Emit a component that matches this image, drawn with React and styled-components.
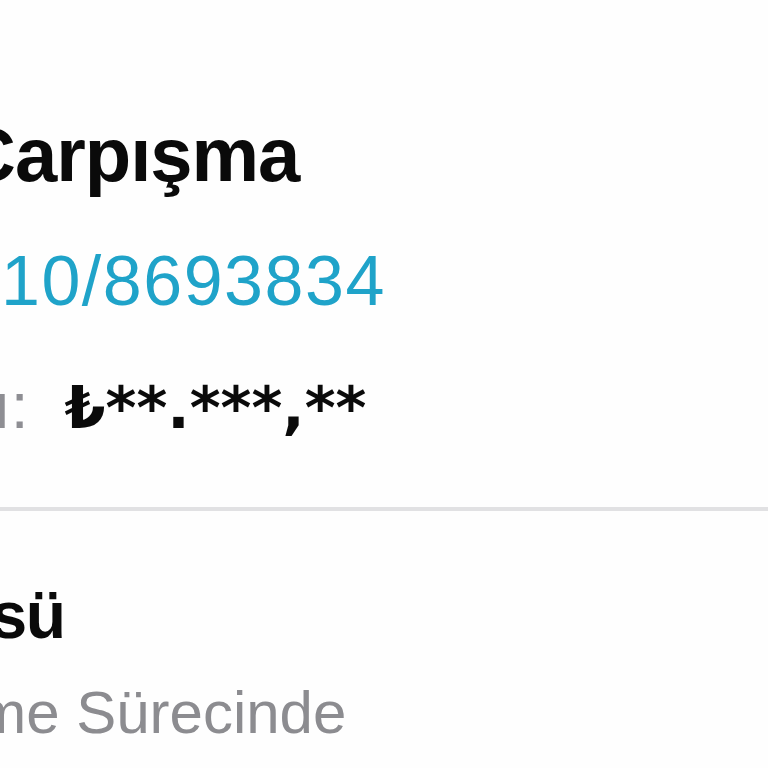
import React from "react";
import styled, { createGlobalStyle } from "styled-components";

const Global = createGlobalStyle`
  html, body { margin: 0; padding: 0; background: #fefefe; }
  body { overflow: hidden; font-family: "Liberation Sans", Arial, sans-serif; }
`;

const Page = styled.div`
  width: 768px;
  height: 768px;
  overflow: hidden;
  background: #fefefe;
  display: flex;
  flex-direction: column;
`;

const Section = styled.section`
  display: flex;
  flex-direction: column;
  padding-top: ${(p) => p.$top}px;
`;

const Line = styled.div`
  margin-left: ${(p) => p.$shift || 0}px;
  margin-top: ${(p) => p.$gap || 0}px;
  white-space: nowrap;
`;

const Title = styled(Line)`
  font-size: ${(p) => p.$size}px;
  line-height: ${(p) => p.$size}px;
  font-weight: 700;
  color: #0a0a0a;
  letter-spacing: ${(p) => p.$ls || 0}px;
`;

const RefNo = styled(Line)`
  font-size: 70px;
  line-height: 70px;
  color: #1fa3c9;
  letter-spacing: 1.5px;
`;

const AmountRow = styled(Line)`
  display: flex;
  align-items: baseline;
  gap: 36px;
  line-height: 64px;
`;

const Label = styled.span`
  font-size: 64px;
  color: #8e8e93;
`;

const Amount = styled.span`
  font-family: "DejaVu Sans", sans-serif;
  font-weight: 700;
  font-size: 59px;
  color: #0a0a0a;
`;

const Divider = styled.hr`
  border: 0;
  margin: 67px 0 0;
  height: 4px;
  background: #e1e1e3;
`;

const Subtitle = styled(Line)`
  font-size: 60px;
  line-height: 60px;
  color: #8c8c90;
`;

export default function App() {
  return (
    <>
      <Global />
      <Page>
        <Section $top={117}>
          <Title $size={76} $ls={-1} $shift={-39}>Çarpışma</Title>
          <RefNo $gap={53} $shift={1}>10/8693834</RefNo>
          <AmountRow $gap={58} $shift={-154}>
            <Label>Tutarı:</Label>
            <Amount>₺**.***,**</Amount>
          </AmountRow>
        </Section>
        <Divider />
        <Section $top={0}>
          <Title $size={66} $ls={-1.5} $shift={-167} $gap={71}>Statüsü</Title>
          <Subtitle $gap={35} $shift={-334}>Değerlendirme Sürecinde</Subtitle>
        </Section>
      </Page>
    </>
  );
}
